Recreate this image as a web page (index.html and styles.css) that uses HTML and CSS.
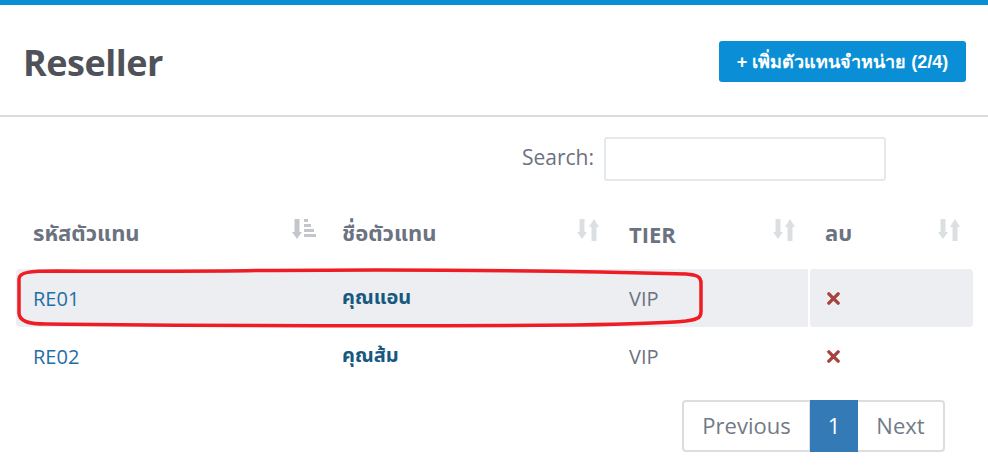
FILE: index.html
```html
<!DOCTYPE html>
<html lang="th">
<head>
<meta charset="utf-8">
<title>Reseller</title>
<link rel="stylesheet" href="styles.css">
</head>
<body>
<div class="topbar"></div>
<header class="header">
  <h1 class="title">Reseller</h1>
  <button class="add-btn">+ เพิ่มตัวแทนจำหน่าย (2/4)</button>
</header>
<main class="content">
  <div class="search-row">
    <label class="search-label" for="q">Search:</label>
    <input class="search-input" id="q" type="text">
  </div>
  <div class="table-wrap">
    <table class="grid">
      <thead>
        <tr>
          <th class="c1"><div class="th-in"><span>รหัสตัวแทน</span>
            <svg class="sort sort-on" viewBox="0 0 24 24" width="24" height="24"><rect x="2.5" y="1" width="5" height="14"/><polygon points="0,14 10,14 5,21"/><rect x="12" y="1" width="4" height="3"/><rect x="12" y="6" width="7" height="3"/><rect x="12" y="11" width="10" height="3"/><rect x="12" y="16" width="12" height="3"/></svg></div></th>
          <th class="c2"><div class="th-in"><span>ชื่อตัวแทน</span>
            <svg class="sort" viewBox="0 0 22 24" width="22" height="24"><rect x="2.5" y="1" width="5" height="14"/><polygon points="0,14 10,14 5,21"/><rect x="14.5" y="8" width="5" height="15"/><polygon points="12,9 22,9 17,1"/></svg></div></th>
          <th class="c3"><div class="th-in"><span>TIER</span>
            <svg class="sort" viewBox="0 0 22 24" width="22" height="24"><rect x="2.5" y="1" width="5" height="14"/><polygon points="0,14 10,14 5,21"/><rect x="14.5" y="8" width="5" height="15"/><polygon points="12,9 22,9 17,1"/></svg></div></th>
          <th class="c4"><div class="th-in"><span>ลบ</span>
            <svg class="sort" viewBox="0 0 22 24" width="22" height="24"><rect x="2.5" y="1" width="5" height="14"/><polygon points="0,14 10,14 5,21"/><rect x="14.5" y="8" width="5" height="15"/><polygon points="12,9 22,9 17,1"/></svg></div></th>
        </tr>
      </thead>
      <tbody>
        <tr class="odd">
          <td class="code">RE01</td>
          <td class="name">คุณแอน</td>
          <td class="tier">VIP</td>
          <td class="del"><svg viewBox="0 0 14 14" width="13" height="13"><path d="M2 2 L12 12 M12 2 L2 12"/></svg></td>
        </tr>
        <tr>
          <td class="code">RE02</td>
          <td class="name">คุณส้ม</td>
          <td class="tier">VIP</td>
          <td class="del"><svg viewBox="0 0 14 14" width="13" height="13"><path d="M2 2 L12 12 M12 2 L2 12"/></svg></td>
        </tr>
      </tbody>
    </table>
    <svg class="mark" viewBox="0 0 690 62" width="690" height="62"><path d="M40 4 C 14 4, 3 5, 3 12 L 3 46 C 3 54, 12 57, 30 57 C 150 58, 300 60, 560 58 C 620 57, 650 56, 670 54 C 684 52, 685 50, 685 44 L 685 16 C 685 10, 682 8, 670 7 C 600 5, 500 3, 360 3 C 250 3, 150 5, 40 4 Z"/></svg>
  </div>
  <div class="pager-row">
    <nav class="pager">
      <a class="pg pg-prev">Previous</a>
      <a class="pg pg-cur">1</a>
      <a class="pg pg-next">Next</a>
    </nav>
  </div>
</main>
</body>
</html>
```
FILE: styles.css
```css
* { box-sizing: border-box; }
html, body { margin: 0; padding: 0; background: #fff; }
body {
  font-family: "Open Sans", "Noto Sans", "Noto Sans Thai", sans-serif;
  color: #6b7280;
  width: 988px;
  height: 470px;
  overflow: hidden;
}
.topbar { height: 5px; background: #0a8fd6; }
.header {
  height: 112px;
  display: flex;
  align-items: center;
  justify-content: space-between;
  padding: 4px 22px 0 23px;
  border-bottom: 2px solid #dcdcdc;
}
.title {
  margin: 0;
  font-size: 36px;
  font-weight: 700;
  color: #4f5359;
  letter-spacing: -0.5px;
}
.add-btn {
  height: 41px;
  width: 247px;
  border: 0;
  border-radius: 3px;
  background: #0a8fd6;
  color: #fff;
  font-family: "Liberation Sans", "Noto Sans", sans-serif;
  font-weight: 700;
  font-size: 18px;
  padding: 0;
  margin-top: -2px;
}
.content { padding: 0 15px 0 16px; }
.search-row {
  display: flex;
  justify-content: flex-end;
  align-items: center;
  gap: 10px;
  padding: 20px 87px 0 0;
}
.search-label { font-size: 21px; color: #6b7280; margin-top: -4px; }
.search-input {
  width: 282px;
  height: 44px;
  border: 2px solid #e5e8ec;
  border-radius: 3px;
  background: #fff;
}
.table-wrap { position: relative; margin-top: 24px; }
.grid {
  width: 957px;
  border-collapse: separate;
  border-spacing: 0;
  table-layout: fixed;
}
.c1 { width: 309px; }
.c2 { width: 287px; }
.c3 { width: 196px; }
.c4 { width: 165px; }
th {
  height: 64px;
  padding: 0 13px 6px 17px;
  text-align: left;
  font-size: 22px;
  font-weight: 700;
  color: #6b7280;
  vertical-align: middle;
}
.th-in {
  display: flex;
  align-items: center;
  justify-content: space-between;
}
.sort { fill: #dcdfe2; margin-top: -8px; }
.sort-on { fill: #c3c6ca; margin-right: -4px; }
td {
  height: 58px;
  padding: 0 17px;
  font-size: 20px;
  vertical-align: middle;
}
.odd td { background: #eceef1; }
.odd td:first-child { border-radius: 4px 0 0 4px; }
.odd td:last-child { border-radius: 4px; border-left: 2px solid #fff; }
tbody tr:not(.odd) td:last-child { border-left: 2px solid #fff; }
.code { color: #1f6ea5; }
.name { color: #17587f; font-weight: 700; }
.tier { color: #6b7280; }
.del svg { stroke: #a8423f; stroke-width: 3.6; stroke-linecap: round; fill: none; display: block; }
.mark {
  position: absolute;
  left: 0;
  top: 62px;
  fill: none;
  stroke: #ee1c25;
  stroke-width: 3.5;
}
.pager-row { display: flex; justify-content: flex-end; padding: 15px 28px 0 0; }
.pager {
  display: flex;
  border: 2px solid #dddddd;
  border-radius: 4px;
  height: 52px;
}
.pg {
  display: flex;
  align-items: center;
  justify-content: center;
  font-size: 22px;
  color: #727a86;
  padding-bottom: 3px;
}
.pg-prev { width: 126px; border-right: 1px solid #ddd; }
.pg-cur { width: 48px; background: #337ab7; color: #fff; margin: -2px 0; }
.pg-next { width: 85px; }
```
